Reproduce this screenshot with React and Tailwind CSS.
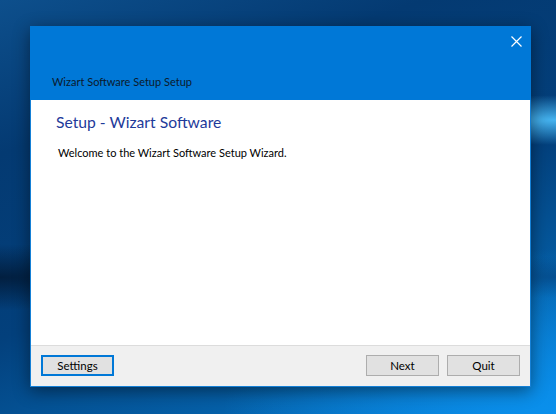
import React from "react";

export default function App() {
  const font = { fontFamily: 'Lato, "Noto Sans", sans-serif' };
  return (
    <div
      className="w-[556px] h-[414px] overflow-hidden pt-[26px] pl-[30px] bg-[radial-gradient(ellipse_60%_40%_at_100%_100%,#0a90ec,transparent),radial-gradient(ellipse_30%_6%_at_100%_29%,#46b4f0,transparent),radial-gradient(ellipse_20%_5%_at_100%_67%,#04427e,transparent),radial-gradient(ellipse_40%_8%_at_0%_67%,#021f40,transparent),linear-gradient(160deg,#0d4f8c_0%,#043a72_25%,#03407c_55%,#0560a8_80%,#0a80d8_100%)]"
      style={font}
    >
      <div className="w-[501px] h-[361px] flex flex-col border border-[#1580d6] bg-white shadow-[0_4px_16px_rgba(0,0,0,0.45)]">
        <div className="relative h-[74px] bg-[#0078d7] flex flex-col justify-end pl-[22px] pb-[10px] -mx-px -mt-px">
          <span className="text-[11px] leading-[16px] text-[#0c1a2c]">
            Wizart Software Setup Setup
          </span>
          <svg
            className="absolute right-[9px] top-[10px]"
            width="11"
            height="11"
            viewBox="0 0 11 11"
          >
            <path d="M0.5 0.5L10.5 10.5M10.5 0.5L0.5 10.5" stroke="#ffffff" strokeWidth="1.2" />
          </svg>
        </div>
        <div className="flex-1 bg-white pt-[11px] pl-[25px]">
          <div className="text-[15.7px] leading-[22px] text-[#1e3a9a]">Setup - Wizart Software</div>
          <div className="mt-[12px] pl-[2px] text-[11px] leading-[16px] text-black">
            Welcome to the Wizart Software Setup Wizard.
          </div>
        </div>
        <div className="h-[41px] border-t border-[#dcdcdc] bg-[#f0f0f0] flex items-start pt-[9px] px-[10px]">
          <button className="w-[73px] h-[21px] border-2 border-[#0078d7] bg-[#e1e1e1] text-[11.5px] leading-[14px] text-black flex items-center justify-center">
            Settings
          </button>
          <div className="flex-1" />
          <div className="flex gap-[8px]">
            <button className="w-[73px] h-[21px] border border-[#adadad] bg-[#e1e1e1] text-[11.5px] leading-[14px] text-black flex items-center justify-center">
              Next
            </button>
            <button className="w-[73px] h-[21px] border border-[#adadad] bg-[#e1e1e1] text-[11.5px] leading-[14px] text-black flex items-center justify-center">
              Quit
            </button>
          </div>
        </div>
      </div>
    </div>
  );
}
